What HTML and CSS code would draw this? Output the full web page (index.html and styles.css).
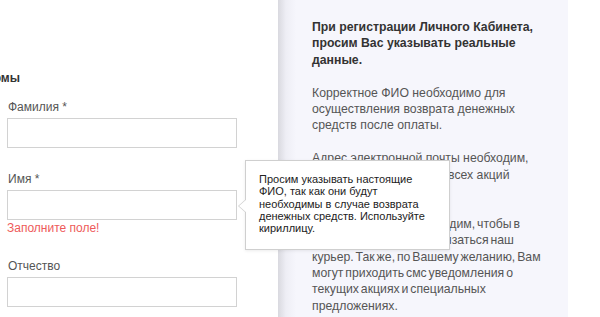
FILE: index.html
```html
<!DOCTYPE html>
<html>
<head>
	<meta charset="utf-8">
	<title>Регистрация</title>
	<link rel="stylesheet" href="styles.css">
</head>
<body>
	<div class="page">
		<div class="form">
			<div class="form-title">Личные данные формы</div>
			<div class="field">
				<div class="label">Фамилия *</div>
				<div class="input"></div>
			</div>
			<div class="field">
				<div class="label">Имя *</div>
				<div class="input"></div>
				<div class="error">Заполните поле!</div>
				<div class="hint">
					Просим указывать настоящие ФИО, так как они будут необходимы в случае возврата денежных средств. Используйте кириллицу.
				</div>
			</div>
			<div class="field">
				<div class="label">Отчество</div>
				<div class="input"></div>
			</div>
		</div>
		<div class="info">
			<p class="info-title">При регистрации Личного Кабинета, просим Вас указывать реальные данные.</p>
			<p>Корректное ФИО необходимо для осуществления возврата денежных средств после оплаты.</p>
			<p>Адрес электронной почты необходим, чтобы Вы были в курсе всех акций магазина и новинок.</p>
			<p class="tight">Номер телефона необходим, чтобы в случае нужды с Вами связаться наш курьер. Так же, по Вашему желанию, Вам могут приходить смс уведомления о текущих акциях и специальных предложениях.</p>
		</div>
	</div>
</body>
</html>
```

FILE: styles.css
```css
body{
	margin: 0;
	font-family: "Liberation Sans", Arial, sans-serif;
	font-size: 12px;
	color: #555;
	background: #fff;
}
.page{
	display: flex;
	height: 317px;
	overflow: hidden;
}
.form{
	width: 278px;
	flex-shrink: 0;
	padding: 70px 0 0 7px;
	box-sizing: border-box;
}
.form-title{
	width: 200px;
	margin-left: -187px;
	text-align: right;
	line-height: 16px;
	font-weight: bold;
	color: #333;
	white-space: nowrap;
	margin-bottom: 13px;
}
.field{
	position: relative;
	margin-bottom: 23px;
}
.label{
	line-height: 16px;
	padding-left: 1px;
	margin-bottom: 3px;
}
.input{
	width: 230px;
	height: 30px;
	box-sizing: border-box;
	border: 1px solid #d2d2d2;
	background: #fff;
}
.error{
	color: #ee5a5a;
	line-height: 16px;
	margin-bottom: -1px;
}
.hint{
	position: absolute;
	left: 238px;
	top: -11px;
	width: 205px;
	box-sizing: border-box;
	padding: 12px 15px 15px 13px;
	background: #fff;
	border: 1px solid #cfcfcf;
	box-shadow: 0 1px 3px rgba(0,0,0,0.08);
	font-size: 11px;
	line-height: 12.3px;
	color: #222;
}
.hint:before, .hint:after{
	content: "";
	position: absolute;
	top: 38px;
	border-style: solid;
	border-color: transparent;
}
.hint:before{
	left: -8px;
	border-width: 7px 8px 7px 0;
	border-right-color: #cfcfcf;
}
.hint:after{
	left: -7px;
	border-width: 7px 8px 7px 0;
	border-right-color: #fff;
}
.info{
	width: 290px;
	flex-shrink: 0;
	padding: 19px 21px 0 34px;
	box-sizing: border-box;
	background: linear-gradient(to right, #d9d9df, #eeeef5 8px, #f6f6fc 18px);
	font-size: 12.25px;
	line-height: 16.4px;
}
.info p{
	margin: 0 0 16.4px 0;
}
.info .info-title{
	font-weight: bold;
	color: #333;
}
.info .tight{
	word-spacing: -1.5px;
}
```
